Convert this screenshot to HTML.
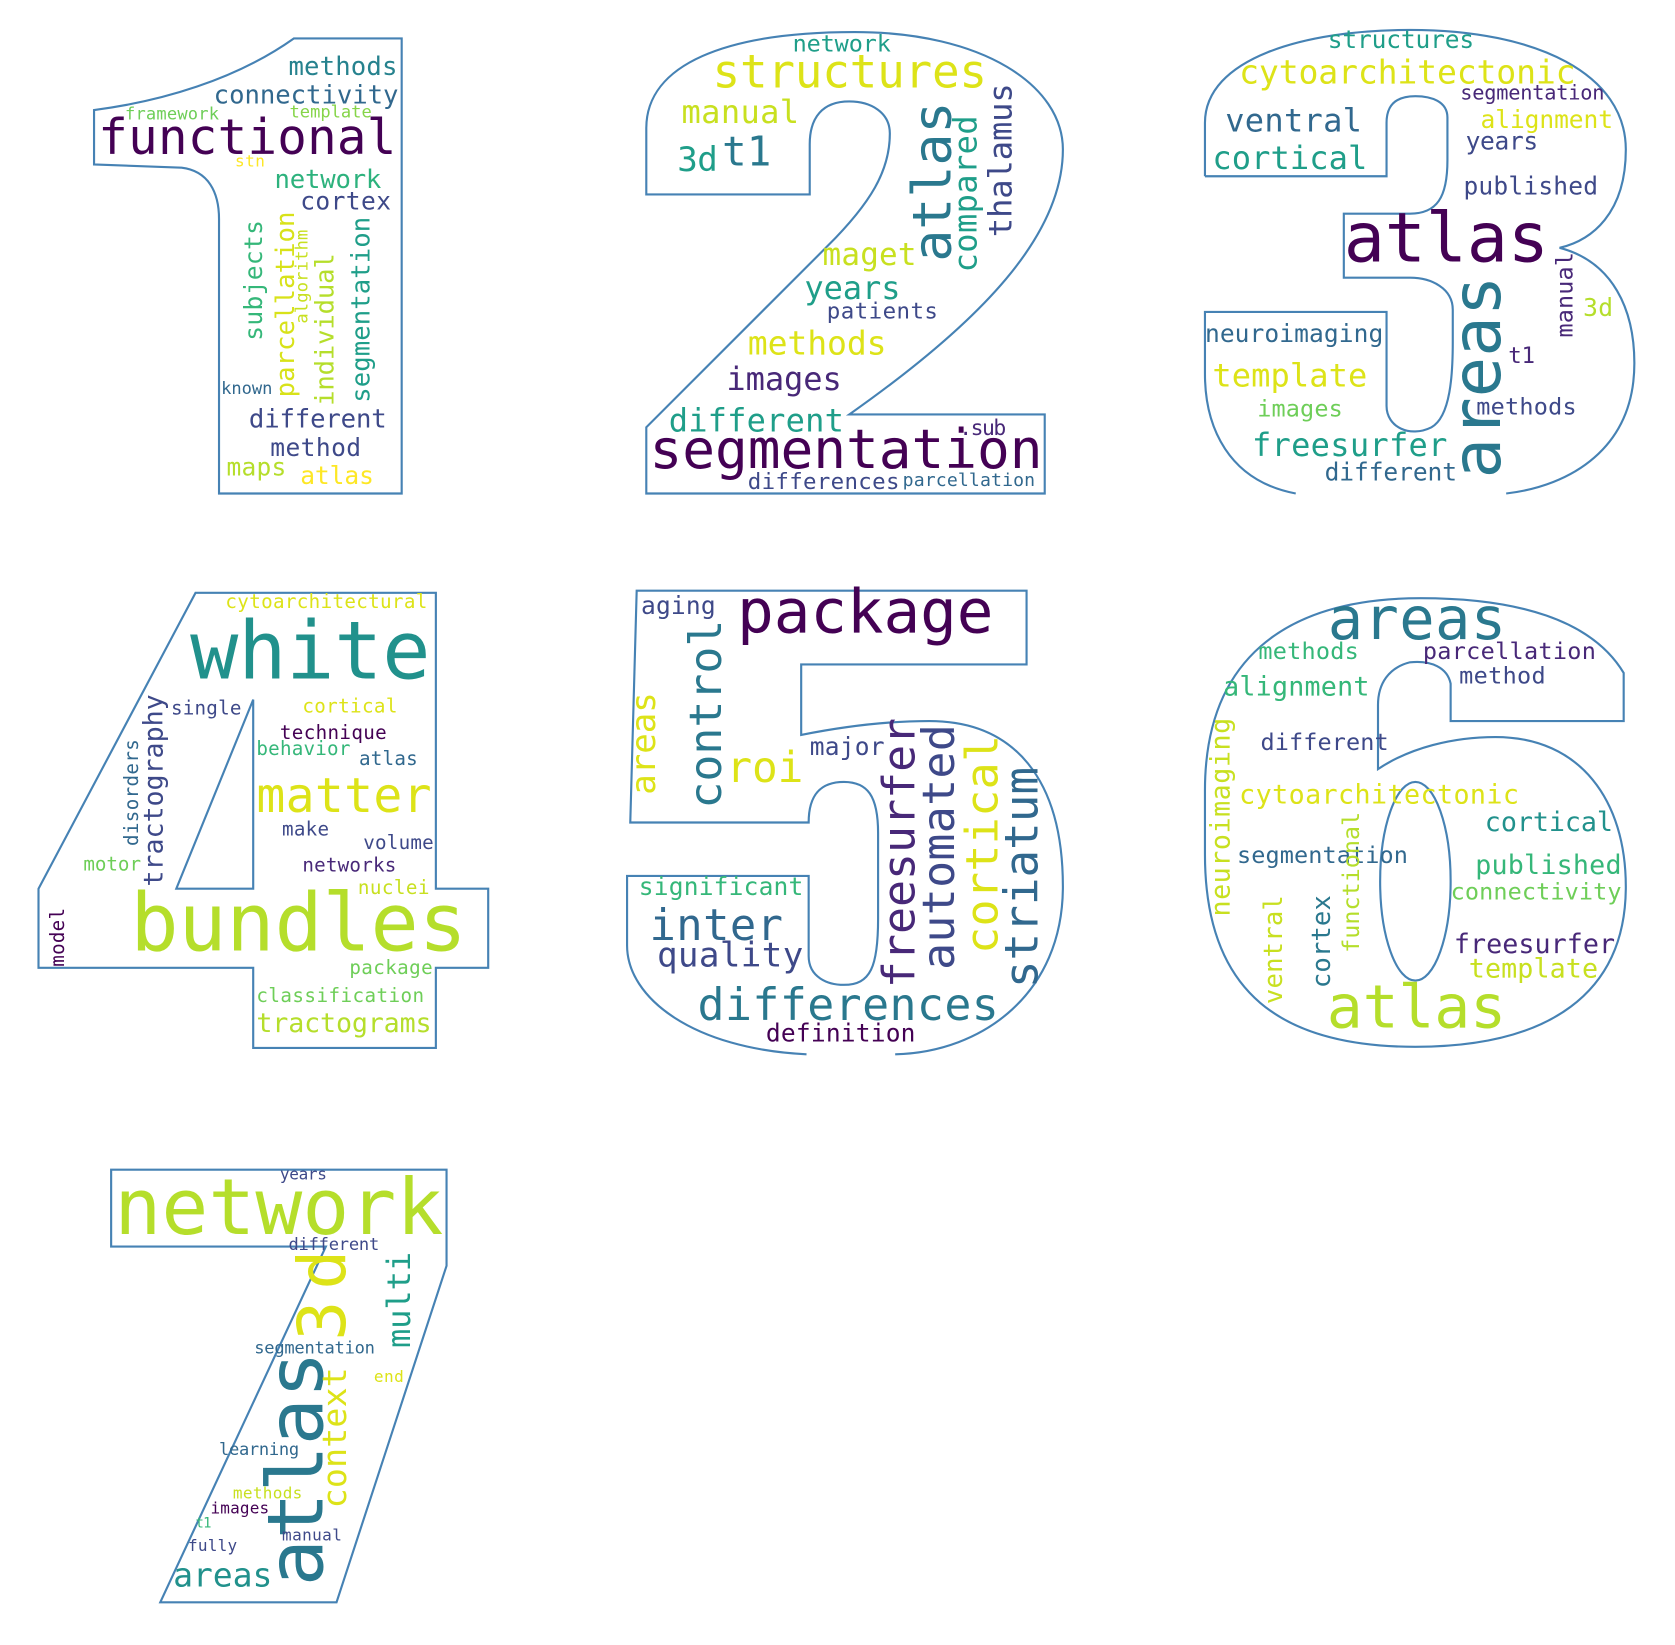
<!DOCTYPE html>
<html><head><meta charset="utf-8"><style>
html,body{margin:0;padding:0;background:#fff;}
svg{display:block;}
text{font-family:"DejaVu Sans Mono","Liberation Mono",monospace;}
</style></head><body>
<svg width="1675" height="1645" viewBox="0 0 1568 1540" xmlns="http://www.w3.org/2000/svg">
<g fill="none" stroke="#4682b4" stroke-width="2">
<path d="M88,103 C150,95 220,75 275,36 L376,36 L376,462 L205,462 L205,205 C205,180 195,160 170,157 L88,154 Z"/>
<path d="M605,182 L605,120 C605,60 680,30 800,30 C920,30 995,80 995,140 C995,220 920,300 795,388 L978,388 L978,462 L605,462 L605,400 L775,230 C815,190 833,160 833,125 C833,105 815,95 795,95 C770,95 758,110 758,135 L758,182 Z"/>
<path d="M1128,165 L1128,115 C1128,55 1220,28 1320,28 C1440,28 1522,70 1522,140 C1522,200 1490,225 1460,232 C1510,245 1530,290 1530,340 C1530,420 1470,455 1410,462"/>
<path d="M1213,462 C1150,450 1128,400 1128,350 L1128,292 L1298,292 L1298,380 C1298,400 1320,410 1340,400 C1358,390 1360,350 1360,320 L1360,290 C1360,270 1340,260 1320,260 L1258,260 L1258,200 L1320,200 C1345,200 1355,185 1355,150 L1355,110 C1355,95 1340,90 1325,90 C1305,90 1298,100 1298,115 L1298,165 L1128,165"/>
<path d="M183,555 L408,555 L408,832 L457,832 L457,906 L408,906 L408,981 L237,981 L237,906 L36,906 L36,832 Z M237,655 L237,832 L165,832 Z"/>
<path d="M838,987 C920,985 995,930 995,830 C995,730 950,675 870,675 C830,675 790,680 750,688 L750,622 L961,622 L961,553 L596,553 L590,770 L757,770 C757,742 770,732 790,732 C812,732 822,745 822,780 L822,860 C822,905 815,922 790,922 C775,922 757,915 757,895 L757,820 L587,820 L587,885 C587,935 650,982 755,987"/>
<path d="M1520,675 L1358,675 L1358,640 C1355,625 1340,618 1320,620 C1300,625 1290,640 1290,660 L1290,720 C1320,700 1360,690 1400,690 C1480,690 1522,750 1522,830 C1522,930 1450,980 1325,980 C1200,980 1128,930 1128,800 L1128,740 C1128,620 1200,560 1330,560 C1420,560 1490,580 1520,630 Z"/>
<ellipse cx="1325" cy="825" rx="33" ry="93"/>
<path d="M104,1095 L418,1095 L418,1185 L315,1500 L150,1500 L305,1167 L104,1167 Z"/>
</g>

<!-- 1 -->
<text x="270" y="70" font-size="24" fill="#26828e" textLength="102">methods</text>
<text x="200" y="97" font-size="24" fill="#31688e" textLength="173">connectivity</text>
<text x="117" y="112" font-size="16" fill="#6ece58" textLength="88">framework</text>
<text x="271" y="110" font-size="16" fill="#86d549" textLength="77">template</text>
<text x="92" y="144" font-size="46" fill="#440154" textLength="279">functional</text>
<text x="220" y="156" font-size="15" fill="#fde725" textLength="28">stn</text>
<text x="257" y="176" font-size="24" fill="#2db27d" textLength="100">network</text>
<text x="281" y="196" font-size="23" fill="#3e4989" textLength="85">cortex</text>
<text transform="translate(245,319) rotate(-90)" font-size="23" fill="#35b779" textLength="113">subjects</text>
<text transform="translate(275,372) rotate(-90)" font-size="24" fill="#d8e219" textLength="174">parcellation</text>
<text transform="translate(288,303) rotate(-90)" font-size="16" fill="#c8e020" textLength="88">algorithm</text>
<text transform="translate(312,380) rotate(-90)" font-size="24" fill="#b5de2b" textLength="143">individual</text>
<text transform="translate(346,377) rotate(-90)" font-size="24" fill="#1f9e89" textLength="174">segmentation</text>
<text x="207" y="369" font-size="16" fill="#31688e" textLength="48">known</text>
<text x="233" y="400" font-size="24" fill="#3e4989" textLength="129">different</text>
<text x="253" y="427" font-size="23" fill="#3e4989" textLength="85">method</text>
<text x="212" y="445" font-size="23" fill="#b5de2b" textLength="56">maps</text>
<text x="281" y="453" font-size="23" fill="#fde725" textLength="69">atlas</text>

<!-- 2 -->
<text x="742" y="48" font-size="22" fill="#1f9e89" textLength="92">network</text>
<text x="667" y="82" font-size="43" fill="#dde318" textLength="257">structures</text>
<text x="638" y="115" font-size="30" fill="#c8e020" textLength="110">manual</text>
<text x="634" y="160" font-size="32" fill="#1f9e89" textLength="38">3d</text>
<text x="676" y="155" font-size="38" fill="#2a788e" textLength="46">t1</text>
<text transform="translate(890,245) rotate(-90)" font-size="50" fill="#2a788e" textLength="150">atlas</text>
<text transform="translate(914,255) rotate(-90)" font-size="30" fill="#1f9e89" textLength="147">compared</text>
<text transform="translate(947,222) rotate(-90)" font-size="30" fill="#3e4989" textLength="144">thalamus</text>
<text x="770" y="248" font-size="29" fill="#c8e020" textLength="88">maget</text>
<text x="753" y="280" font-size="30" fill="#1f9e89" textLength="90">years</text>
<text x="774" y="298" font-size="21" fill="#3e4989" textLength="104">patients</text>
<text x="700" y="332" font-size="31" fill="#dde318" textLength="130">methods</text>
<text x="680" y="365" font-size="30" fill="#482878" textLength="108">images</text>
<text x="626" y="404" font-size="30" fill="#1f9e89" textLength="164">different</text>
<text x="898" y="407" font-size="20" fill="#482878" textLength="44">.sub</text>
<text x="608" y="438" font-size="51" fill="#440154" textLength="368">segmentation</text>
<text x="700" y="458" font-size="21" fill="#3e4989" textLength="142">differences</text>
<text x="845" y="455" font-size="17" fill="#31688e" textLength="124">parcellation</text>

<!-- 3 -->
<text x="1243" y="45" font-size="23" fill="#1f9e89" textLength="137">structures</text>
<text x="1160" y="78" font-size="31" fill="#dde318" textLength="315">cytoarchitectonic</text>
<text x="1367" y="93" font-size="19" fill="#482878" textLength="135">segmentation</text>
<text x="1147" y="123" font-size="30" fill="#31688e" textLength="128">ventral</text>
<text x="1386" y="120" font-size="23" fill="#dde318" textLength="124">alignment</text>
<text x="1372" y="140" font-size="23" fill="#3e4989" textLength="68">years</text>
<text x="1135" y="158" font-size="30" fill="#1f9e89" textLength="145">cortical</text>
<text x="1370" y="182" font-size="23" fill="#3e4989" textLength="126">published</text>
<text x="1258" y="245" font-size="64" fill="#440154" textLength="192">atlas</text>
<text transform="translate(1472,316) rotate(-90)" font-size="22" fill="#482878" textLength="80">manual</text>
<text transform="translate(1404,448) rotate(-90)" font-size="63" fill="#2a788e" textLength="190">areas</text>
<text x="1482" y="296" font-size="23" fill="#b5de2b" textLength="28">3d</text>
<text x="1128" y="320" font-size="23" fill="#31688e" textLength="167">neuroimaging</text>
<text x="1412" y="340" font-size="21" fill="#482878" textLength="25">t1</text>
<text x="1135" y="362" font-size="30" fill="#dde318" textLength="145">template</text>
<text x="1382" y="388" font-size="22" fill="#3e4989" textLength="94">methods</text>
<text x="1177" y="390" font-size="22" fill="#6ece58" textLength="80">images</text>
<text x="1172" y="427" font-size="30" fill="#1f9e89" textLength="183">freesurfer</text>
<text x="1240" y="450" font-size="23" fill="#31688e" textLength="124">different</text>

<!-- 4 -->
<text x="211" y="569" font-size="18" fill="#dde318" textLength="189">cytoarchitectural</text>
<text x="178" y="635" font-size="75" fill="#21918c" textLength="225">white</text>
<text transform="translate(152,830) rotate(-90)" font-size="25" fill="#3e4989" textLength="180">tractography</text>
<text x="160" y="669" font-size="18" fill="#3e4989" textLength="66">single</text>
<text x="283" y="667" font-size="18" fill="#dde318" textLength="89">cortical</text>
<text x="262" y="692" font-size="18" fill="#440154" textLength="100">technique</text>
<text x="240" y="707" font-size="18" fill="#35b779" textLength="88">behavior</text>
<text x="336" y="716" font-size="18" fill="#31688e" textLength="55">atlas</text>
<text transform="translate(129,792) rotate(-90)" font-size="18" fill="#31688e" textLength="100">disorders</text>
<text x="240" y="760" font-size="45" fill="#dde318" textLength="164">matter</text>
<text x="264" y="782" font-size="18" fill="#3e4989" textLength="44">make</text>
<text x="340" y="795" font-size="18" fill="#3e4989" textLength="66">volume</text>
<text x="78" y="815" font-size="18" fill="#6ece58" textLength="54">motor</text>
<text x="283" y="816" font-size="18" fill="#482878" textLength="88">networks</text>
<text x="335" y="837" font-size="18" fill="#c8e020" textLength="67">nuclei</text>
<text x="122" y="890" font-size="75" fill="#b5de2b" textLength="315">bundles</text>
<text transform="translate(60,905) rotate(-90)" font-size="18" fill="#440154" textLength="55">model</text>
<text x="327" y="912" font-size="18" fill="#6ece58" textLength="78">package</text>
<text x="240" y="938" font-size="18" fill="#6ece58" textLength="157">classification</text>
<text x="240" y="966" font-size="25" fill="#b5de2b" textLength="164">tractograms</text>

<!-- 5 -->
<text x="600" y="575" font-size="23" fill="#3e4989" textLength="70">aging</text>
<text x="690" y="592" font-size="57" fill="#440154" textLength="240">package</text>
<text transform="translate(675,757) rotate(-90)" font-size="42" fill="#2a788e" textLength="177">control</text>
<text transform="translate(613,744) rotate(-90)" font-size="32" fill="#dde318" textLength="96">areas</text>
<text x="680" y="732" font-size="40" fill="#dde318" textLength="72">roi</text>
<text x="758" y="707" font-size="23" fill="#3e4989" textLength="70">major</text>
<text transform="translate(856,925) rotate(-90)" font-size="42" fill="#482878" textLength="253">freesurfer</text>
<text transform="translate(893,908) rotate(-90)" font-size="42" fill="#3e4989" textLength="230">automated</text>
<text transform="translate(934,893) rotate(-90)" font-size="42" fill="#dde318" textLength="205">cortical</text>
<text transform="translate(971,925) rotate(-90)" font-size="43" fill="#31688e" textLength="207">striatum</text>
<text x="598" y="838" font-size="23" fill="#35b779" textLength="154">significant</text>
<text x="608" y="880" font-size="41" fill="#31688e" textLength="125">inter</text>
<text x="615" y="905" font-size="32" fill="#3e4989" textLength="137">quality</text>
<text x="653" y="955" font-size="42" fill="#2a788e" textLength="282">differences</text>
<text x="717" y="975" font-size="23" fill="#440154" textLength="140">definition</text>

<!-- 6 -->
<text x="1243" y="598" font-size="55" fill="#2a788e" textLength="167">areas</text>
<text x="1178" y="617" font-size="22" fill="#35b779" textLength="94">methods</text>
<text x="1332" y="617" font-size="22" fill="#482878" textLength="162">parcellation</text>
<text x="1366" y="640" font-size="22" fill="#3e4989" textLength="81">method</text>
<text x="1145" y="651" font-size="25" fill="#35b779" textLength="137">alignment</text>
<text transform="translate(1151,858) rotate(-90)" font-size="25" fill="#c8e020" textLength="186">neuroimaging</text>
<text x="1180" y="702" font-size="22" fill="#3e4989" textLength="120">different</text>
<text x="1160" y="752" font-size="25" fill="#dde318" textLength="262">cytoarchitectonic</text>
<text x="1390" y="778" font-size="25" fill="#21918c" textLength="120">cortical</text>
<text x="1158" y="808" font-size="22" fill="#31688e" textLength="160">segmentation</text>
<text x="1381" y="818" font-size="25" fill="#35b779" textLength="137">published</text>
<text x="1358" y="842" font-size="22" fill="#6ece58" textLength="160">connectivity</text>
<text transform="translate(1272,892) rotate(-90)" font-size="22" fill="#b5de2b" textLength="132">functional</text>
<text transform="translate(1200,940) rotate(-90)" font-size="24" fill="#c8e020" textLength="102">ventral</text>
<text transform="translate(1245,925) rotate(-90)" font-size="24" fill="#2a788e" textLength="87">cortex</text>
<text x="1361" y="892" font-size="25" fill="#482878" textLength="151">freesurfer</text>
<text x="1375" y="915" font-size="25" fill="#c8e020" textLength="121">template</text>
<text x="1242" y="962" font-size="56" fill="#b5de2b" textLength="168">atlas</text>

<!-- 7 -->
<text x="262" y="1104" font-size="15" fill="#3e4989" textLength="44">years</text>
<text x="107" y="1155" font-size="73" fill="#b5de2b" textLength="308">network</text>
<text x="270" y="1170" font-size="16" fill="#3e4989" textLength="85">different</text>
<text transform="translate(323,1255) rotate(-90)" font-size="62" fill="#dde318" textLength="85">3d</text>
<text transform="translate(384,1262) rotate(-90)" font-size="30" fill="#1f9e89" textLength="90">multi</text>
<text x="238" y="1267" font-size="16" fill="#31688e" textLength="113">segmentation</text>
<text x="350" y="1294" font-size="15" fill="#dde318" textLength="28">end</text>
<text transform="translate(302,1485) rotate(-90)" font-size="73" fill="#2a788e" textLength="220">atlas</text>
<text transform="translate(324,1412) rotate(-90)" font-size="31" fill="#dde318" textLength="132">context</text>
<text x="205" y="1362" font-size="16" fill="#31688e" textLength="75">learning</text>
<text x="218" y="1403" font-size="15" fill="#c8e020" textLength="65">methods</text>
<text x="197" y="1417" font-size="15" fill="#440154" textLength="55">images</text>
<text x="183" y="1430" font-size="13" fill="#35b779" textLength="15">t1</text>
<text x="264" y="1442" font-size="15" fill="#3e4989" textLength="56">manual</text>
<text x="176" y="1452" font-size="15" fill="#3e4989" textLength="46">fully</text>
<text x="162" y="1485" font-size="31" fill="#21918c" textLength="93">areas</text>
</svg>
</body></html>
